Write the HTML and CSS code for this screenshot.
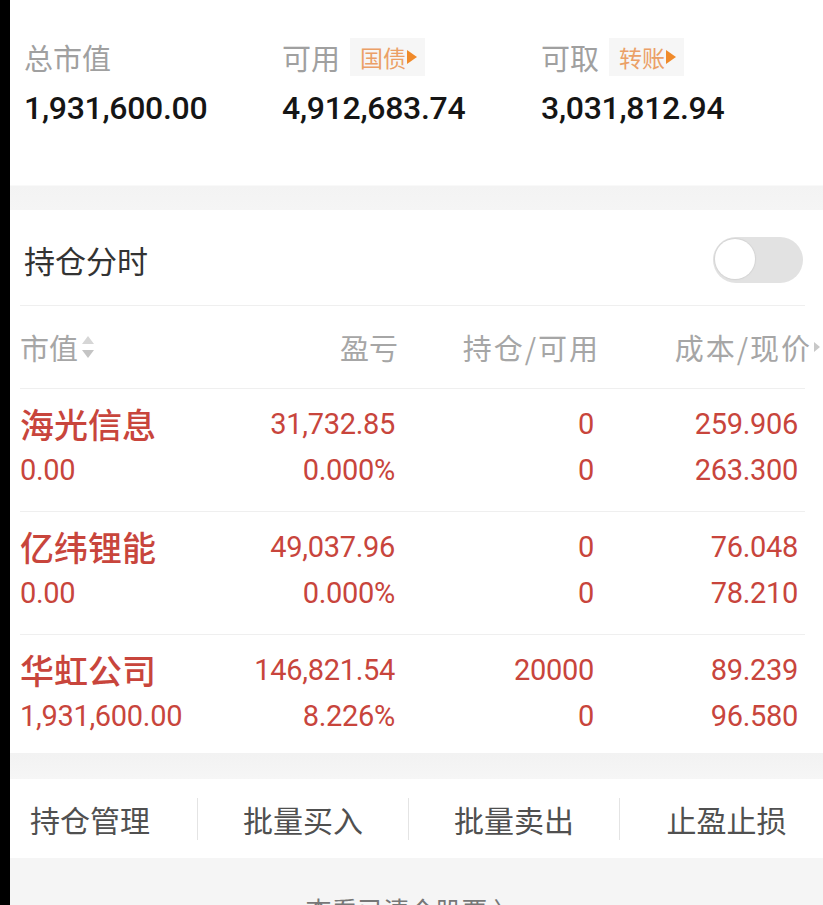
FILE: index.html
```html
<!DOCTYPE html>
<html lang="zh-CN">
<head>
<meta charset="utf-8">
<title>持仓</title>
<link rel="stylesheet" href="styles.css">
</head>
<body>
<div class="screen">
  <section class="summary">
    <div class="sum-col">
      <div class="sum-label"><span>总市值</span></div>
      <div class="sum-value">1,931,600.00</div>
    </div>
    <div class="sum-col">
      <div class="sum-label"><span>可用</span><span class="tag">国债<i class="tri"></i></span></div>
      <div class="sum-value">4,912,683.74</div>
    </div>
    <div class="sum-col">
      <div class="sum-label"><span>可取</span><span class="tag">转账<i class="tri"></i></span></div>
      <div class="sum-value">3,031,812.94</div>
    </div>
  </section>
  <div class="band band-top"></div>
  <section class="card">
    <div class="fenshi">
      <span class="fenshi-title">持仓分时</span>
      <span class="toggle"><span class="knob"></span></span>
    </div>
    <div class="thead">
      <div class="th th-name">市值<svg class="sort" width="14" height="26" viewBox="0 0 14 26"><path d="M7 2 L13 10 L1 10 Z" fill="#d6d6d6"/><path d="M7 24 L13 16 L1 16 Z" fill="#c4c4c4"/></svg></div>
      <div class="th th-r">盈亏</div>
      <div class="th th-r th-hold">持仓/可用</div>
      <div class="th th-r th-last">成本/现价<svg class="arrow" width="10" height="14" viewBox="0 0 10 14"><path d="M2 2 L8 7 L2 12 Z" fill="#c8c8c8"/></svg></div>
    </div>
    <div class="row">
      <div class="c name">海光信息</div><div class="c r">31,732.85</div><div class="c r">0</div><div class="c r">259.906</div>
      <div class="c">0.00</div><div class="c r">0.000%</div><div class="c r">0</div><div class="c r">263.300</div>
    </div>
    <div class="row">
      <div class="c name">亿纬锂能</div><div class="c r">49,037.96</div><div class="c r">0</div><div class="c r">76.048</div>
      <div class="c">0.00</div><div class="c r">0.000%</div><div class="c r">0</div><div class="c r">78.210</div>
    </div>
    <div class="row row-last">
      <div class="c name">华虹公司</div><div class="c r">146,821.54</div><div class="c r">20000</div><div class="c r">89.239</div>
      <div class="c">1,931,600.00</div><div class="c r">8.226%</div><div class="c r">0</div><div class="c r">96.580</div>
    </div>
  </section>
  <div class="band band-mid"></div>
  <nav class="actions">
    <div class="act act-first">持仓管理</div>
    <div class="act">批量买入</div>
    <div class="act">批量卖出</div>
    <div class="act act-end">止盈止损</div>
  </nav>
  <div class="footer">
    <span class="cleared">查看已清仓股票 〉</span>
  </div>
</div>
</body>
</html>
```
FILE: styles.css
```css
html, body {
  margin: 0;
  padding: 0;
  background: #000;
  height: 905px;
  overflow: hidden;
}
body {
  font-family: Roboto, "Noto Sans CJK SC", sans-serif;
}
.screen {
  margin-left: 10px;
  height: 905px;
  background: #fff;
  display: flex;
  flex-direction: column;
}
.screen > * {
  flex: none;
}
.summary {
  display: grid;
  grid-template-columns: 258px 259px auto;
  padding: 38px 0 0 14px;
  height: 147px;
  box-sizing: border-box;
}
.sum-label {
  display: flex;
  align-items: center;
  gap: 10px;
  height: 38px;
  font-family: "Noto Sans CJK SC", sans-serif;
  font-size: 29px;
  color: #a0a0a0;
}
.tag {
  display: inline-flex;
  align-items: center;
  height: 38px;
  padding: 0 8px 0 10px;
  background: #f6f6f6;
  color: #eba066;
  font-size: 23px;
}
.tri {
  display: inline-block;
  width: 0;
  height: 0;
  border-top: 7px solid transparent;
  border-bottom: 7px solid transparent;
  border-left: 10px solid #f08a2a;
  margin-left: 1px;
}
.sum-value {
  margin-top: 13px;
  font-size: 32px;
  font-weight: 500;
  color: #151515;
  line-height: 38px;
  letter-spacing: -0.3px;
}
.band-top {
  height: 63px;
  background: linear-gradient(#fff 0, #fff 38px, #f3f3f3 39px, #f5f5f5 100%);
}
.card {
  background: #fff;
  padding: 0 18px 0 10px;
}
.fenshi {
  display: flex;
  align-items: center;
  justify-content: space-between;
  height: 95px;
  border-bottom: 1px solid #efefef;
  padding-left: 4px;
}
.fenshi-title {
  font-family: "Noto Sans CJK SC", sans-serif;
  font-size: 31px;
  color: #333;
  margin-top: 4px;
}
.toggle {
  position: relative;
  width: 90px;
  height: 46px;
  border-radius: 23px;
  background: #e2e2e2;
  margin-right: 2px;
  margin-top: 4px;
}
.knob {
  position: absolute;
  left: 2px;
  top: 2px;
  width: 40px;
  height: 40px;
  border-radius: 50%;
  background: #fff;
  box-shadow: 0 0 1px 1px #d4d4d4;
}
.thead, .row {
  display: grid;
  grid-template-columns: 210px 165px 199px 204px;
}
.thead {
  height: 82px;
  align-items: center;
  border-bottom: 1px solid #efefef;
  font-family: "Noto Sans CJK SC", sans-serif;
  font-size: 29px;
  color: #a6a6a6;
}
.th-name {
  display: flex;
  align-items: center;
  gap: 3px;
}
.th-r {
  text-align: right;
  margin-right: -3px;
}
.th-hold {
  margin-right: -6px;
  letter-spacing: 2px;
}
.th-last {
  margin-right: -24px;
  display: flex;
  justify-content: flex-end;
  align-items: center;
  letter-spacing: 2px;
}
.arrow { margin-left: 0; }
.row {
  padding: 12px 0 18px;
  border-bottom: 1px solid #efefef;
  color: #c8453c;
  font-size: 29px;
  line-height: 46px;
}
.row-last { border-bottom: none; padding-bottom: 14px; }
.c { white-space: nowrap; letter-spacing: -0.3px; }
.r { text-align: right; }
.name {
  font-family: "Noto Sans CJK SC", sans-serif;
  font-size: 34px;
  font-weight: 500;
  letter-spacing: 0;
}
.band-mid {
  height: 26px;
  background: linear-gradient(#f2f2f2, #f6f6f6);
}
.actions {
  display: grid;
  grid-template-columns: 187px 211px 211px 204px;
  align-items: center;
  height: 79px;
  background: #fff;
  font-family: "Noto Sans CJK SC", sans-serif;
  font-size: 30px;
  color: #505050;
}
.act {
  text-align: center;
  border-left: 1px solid #e4e4e4;
  line-height: 42px;
}
.act-first {
  border-left: none;
  text-align: left;
  padding-left: 20px;
}
.act-end { padding-left: 10px; }
.screen > .footer {
  flex: 1;
  background: #f5f5f5;
  text-align: center;
  padding-top: 33px;
  padding-right: 8px;
}
.cleared {
  font-family: "Noto Sans CJK SC", sans-serif;
  font-size: 26px;
  color: #777;
}
```
